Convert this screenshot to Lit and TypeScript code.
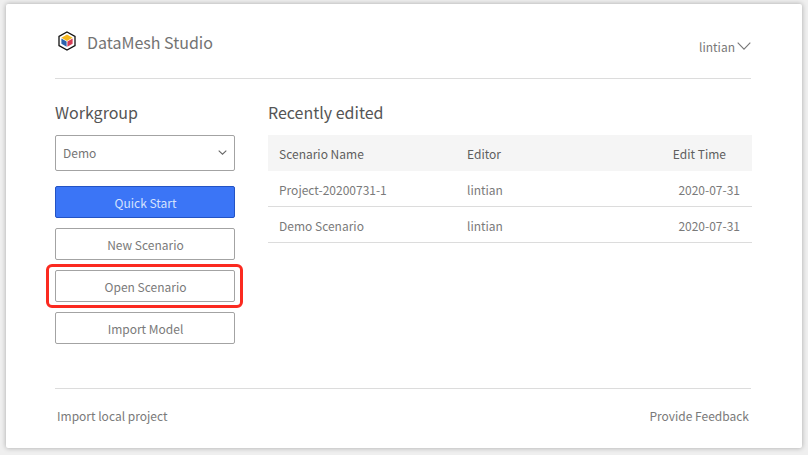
import { LitElement, html, css } from "lit";
import { customElement } from "lit/decorators.js";

@customElement("app-root")
export class AppRoot extends LitElement {
  static styles = css`
    :host {
      display: block;
      width: 808px;
      height: 455px;
      background: #efefef;
      font-family: "Noto Sans CJK SC", "Noto Sans", sans-serif;
      color: #666;
      overflow: hidden;
    }
    .page { width: 808px; height: 455px; box-sizing: border-box; padding: 4px 6px 8px 6px; }
    .card {
      height: 444px;
      box-sizing: border-box;
      background: #fff;
      border-radius: 2px;
      box-shadow: 0 0 5px rgba(0, 0, 0, 0.3);
      padding: 0 51px 0 49px;
      display: flex;
      flex-direction: column;
    }
    .head {
      height: 74px;
      flex: none;
      border-bottom: 1px solid #dcdcdc;
      display: flex;
      align-items: center;
      justify-content: space-between;
    }
    .brand { display: flex; align-items: center; gap: 10px; padding: 2px 0 0 2px; font-size: 16px; color: #737373; line-height: 24px; }
    .brand svg { display: block; margin-top: -3px; }
    .user { display: flex; align-items: center; gap: 2px; font-size: 12px; color: #787878; margin-top: 10px; }
    .main { flex: 1; display: flex; min-height: 0; }
    .side { width: 180px; flex: none; margin-right: 33px; display: flex; flex-direction: column; }
    .title { font-size: 16px; line-height: 24px; color: #555; margin-top: 21px; }
    .select {
      margin-top: 11px;
      height: 36px;
      box-sizing: border-box;
      border: 1px solid #a3a3a3;
      border-radius: 2px;
      display: flex;
      align-items: center;
      justify-content: space-between;
      padding: 0 7px 1px 7px;
      font-size: 12px;
      color: #757575;
    }
    .btns { margin-top: 15px; display: flex; flex-direction: column; gap: 10px; }
    .btn {
      height: 32px;
      box-sizing: border-box;
      border: 1px solid #a3a3a3;
      border-radius: 2px;
      display: flex;
      align-items: center;
      justify-content: center;
      padding-left: 1px;
      font-size: 12px;
      color: #7a7a7a;
      background: #fff;
      position: relative;
    }
    .primary { background: #3b75f6; border-color: #2353c4; color: #d5e2fd; }
    .mark {
      position: absolute;
      left: -10px;
      right: -9px;
      top: -7px;
      bottom: -7px;
      border: 3px solid #fb2a20;
      border-radius: 6px;
    }
    .recent { flex: 1; min-width: 0; margin-right: -1px; }
    table { width: 100%; border-collapse: separate; border-spacing: 0; font-size: 12px; margin-top: 11px; table-layout: fixed; }
    th { background: #f5f5f5; font-weight: 400; color: #5e5e5e; height: 36px; padding: 0; text-align: left; }
    td { height: 36px; padding: 1px 0 0; border-bottom: 1px solid #dcdcdc; color: #7a7a7a; box-sizing: border-box; }
    th:first-child, td:first-child { padding-left: 11px; }
    .c1 { width: 188px; }
    .c2 { width: 140px; }
    th.r { text-align: right; padding-right: 26px; }
    td.r { text-align: right; padding-right: 12px; }
    .foot {
      height: 60px;
      box-sizing: border-box;
      flex: none;
      border-top: 1px solid #dcdcdc;
      display: flex;
      align-items: center;
      justify-content: space-between;
      padding: 0 2px 6px;
      font-size: 12px;
      color: #7a7a7a;
    }
  `;

  private chevron(w: number, h: number, c: string) {
    return html`<svg width=${w} height=${h} viewBox="0 0 ${w} ${h}" fill="none">
      <path d="M0.7 0.7 L${w / 2} ${h - 0.8} L${w - 0.7} 0.7" stroke=${c} stroke-width="1.1" />
    </svg>`;
  }

  render() {
    return html`<div class="page">
      <div class="card">
        <div class="head">
          <div class="brand">
            <svg width="20" height="20" viewBox="0 0 20 20">
              <path d="M10 1 L18 5.5 V14.5 L10 19 L2 14.5 V5.5 Z" fill="#fff" stroke="#111" stroke-width="1.3" />
              <path d="M10 3.6 L15.6 6.8 L10 10 L4.4 6.8 Z" fill="#f5b81e" />
              <path d="M4.4 7.6 L9.6 10.6 V15.8 L4.4 12.8 Z" fill="#2b62ad" />
              <path d="M15.6 7.6 L10.4 10.6 V15.8 L15.6 12.8 Z" fill="#d43c55" />
            </svg>
            <span>DataMesh Studio</span>
          </div>
          <div class="user"><span>lintian</span>${this.chevron(14, 8, "#777")}</div>
        </div>
        <div class="main">
          <div class="side">
            <div class="title">Workgroup</div>
            <div class="select"><span>Demo</span>${this.chevron(9, 5, "#666")}</div>
            <div class="btns">
              <div class="btn primary">Quick Start</div>
              <div class="btn">New Scenario</div>
              <div class="btn">Open Scenario<span class="mark"></span></div>
              <div class="btn">Import Model</div>
            </div>
          </div>
          <div class="recent">
            <div class="title">Recently edited</div>
            <table>
              <thead><tr><th class="c1">Scenario Name</th><th class="c2">Editor</th><th class="r">Edit Time</th></tr></thead>
              <tbody>
                <tr><td>Project-20200731-1</td><td>lintian</td><td class="r">2020-07-31</td></tr>
                <tr><td>Demo Scenario</td><td>lintian</td><td class="r">2020-07-31</td></tr>
              </tbody>
            </table>
          </div>
        </div>
        <div class="foot"><span>Import local project</span><span>Provide Feedback</span></div>
      </div>
    </div>`;
  }
}
